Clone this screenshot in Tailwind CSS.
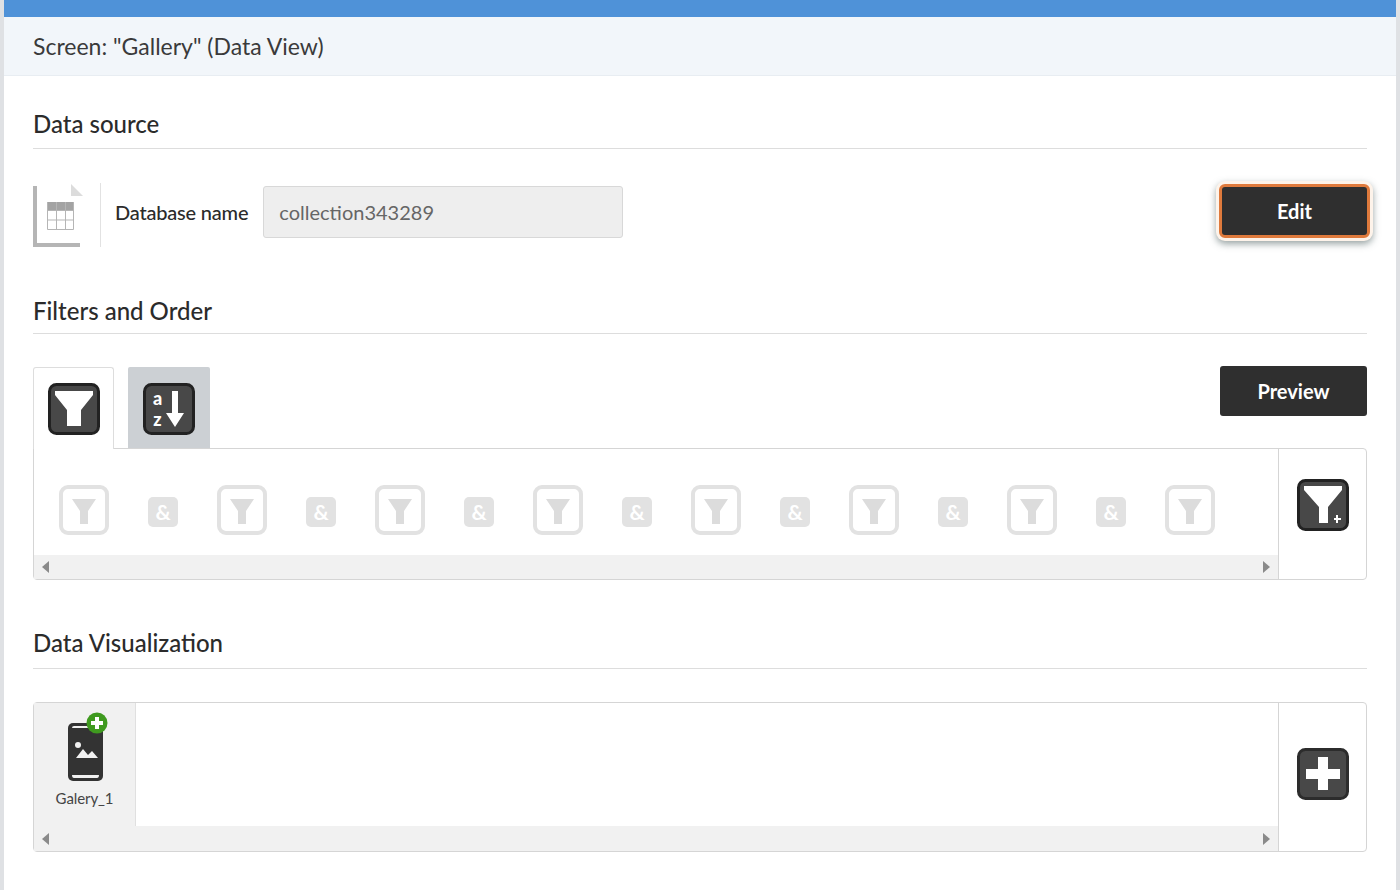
<!DOCTYPE html>
<html>
<head>
<meta charset="utf-8">
<script src="https://cdn.jsdelivr.net/npm/@tailwindcss/browser@4"></script>
</head>
<body class="h-[890px] w-[1400px] overflow-hidden bg-[#dfe1e4] px-1 font-['Lato',sans-serif] text-[#2b2b2b]">
<div class="h-[890px] bg-white">
  <div class="h-[17px] bg-[#4f92d8]"></div>
  <div class="flex h-[59px] items-center border-b border-[#e8edf2] bg-[#f2f6fa] px-[29px] pt-px text-[23px] text-[#3a3a3a]">Screen: "Gallery" (Data View)</div>

  <div class="px-[29px]">
    <h2 class="mt-[31px] h-[42px] border-b border-[#dddddd] text-[24px] leading-[34px] font-medium">Data source</h2>

    <div class="mt-[34px] flex h-[64px] items-start">
      <svg class="mt-px h-[63px] w-[50px]" viewBox="0 0 50 63">
        <path d="M38 0 L50 12 H38 Z" fill="#dcdcdc"/>
        <path d="M0 2 V63 H47 V59 H4 V2 Z" fill="#b5b5b5"/>
        <rect x="14" y="18" width="27" height="8" fill="#a3a3a3"/>
        <path d="M14.500 26 V45.500 H40.500 V18 M14.500 18 V26 M23.500 18 V45.500 M32.500 18 V45.500 M14 26.500 H41 M14 36 H41" fill="none" stroke="#b5b5b5" stroke-width="1"/>
      </svg>
      <div class="ml-[17px] h-[64px] border-l border-[#e2e2e2]"></div>
      <span class="mt-[14px] ml-[14px] text-[20px] leading-[30px] font-medium tracking-[-0.2px] whitespace-nowrap">Database name</span>
      <div class="mt-[3px] ml-[15px] flex h-[52px] w-[360px] items-center rounded-[3px] border border-[#d8d8d8] bg-[#eeeeee] px-[15px] text-[20px] text-[#666666]">collection343289</div>
      <button class="mt-[1px] ml-auto -mr-[3px] flex h-[54px] w-[151px] items-center justify-center rounded-[6px] border-[3px] border-[#df7a3c] bg-[#2f2f2f] text-[20px] font-bold text-white shadow-[0_0_0_3px_#fdf3ea,0_3px_7px_3px_rgba(70,90,90,0.55)]">Edit</button>
    </div>

    <h2 class="mt-[47px] h-[40px] border-b border-[#dddddd] text-[24px] leading-[34px] font-medium">Filters and Order</h2>

    <div class="relative mt-[33px] flex h-[82px] items-start gap-[14px]">
      <div class="relative z-10 flex h-[82px] w-[81px] justify-center rounded-t-[3px] border border-b-0 border-[#dddddd] bg-white pt-[15px]">
        <svg class="h-[52px] w-[52px]" viewBox="0 0 52 52"><rect x="1.500" y="1.500" width="49" height="49" rx="7" fill="#484848" stroke="#222222" stroke-width="3"/><path d="M7 8 H45 V12 L33 27 V43 H19 V27 L7 12 Z" fill="#ffffff"/></svg>
      </div>
      <div class="flex h-[81px] w-[82px] justify-center rounded-t-[2px] bg-[#ccd0d4] pt-4">
        <svg class="h-[52px] w-[52px]" viewBox="0 0 52 52"><rect x="1.500" y="1.500" width="49" height="49" rx="7" fill="#484848" stroke="#222222" stroke-width="3"/><path d="M29 8 H35 V30 H41 L32 44 L23 30 H29 Z" fill="#ffffff"/><text x="14.500" y="22" text-anchor="middle" fill="#ffffff" font-family="Lato" font-weight="900" font-size="18">a</text><text x="14.500" y="43" text-anchor="middle" fill="#ffffff" font-family="Lato" font-weight="900" font-size="18">z</text></svg>
      </div>
      <button class="-mt-px ml-auto flex h-[50px] w-[147px] items-center justify-center rounded-[3px] bg-[#2f2f2f] text-[20px] font-bold text-white">Preview</button>
    </div>

    <div class="-mt-px flex h-[132px] rounded-b-[4px] rounded-tr-[4px] border border-[#d5d5d5]">
      <div class="flex min-w-0 flex-1 flex-col">
        <div class="flex h-[106px] items-start pt-[36px] pl-[25px]">
          <div class="flex items-center gap-[155px] [&>*]:shrink-0" style="gap:0">
            <svg class="h-[50px] w-[50px]" viewBox="0 0 50 50"><rect x="2" y="2" width="46" height="46" rx="7" fill="none" stroke="#e2e2e2" stroke-width="4"/><path d="M13 14 H37 L29 26 V39 H21 V26 Z" fill="#dcdcdc"/></svg>
            <span class="mx-[39px] mt-[3px] flex h-[30px] w-[30px] items-center justify-center rounded-[5px] bg-[#e2e2e2] text-[21px] font-bold text-white">&amp;</span>
            <svg class="h-[50px] w-[50px]" viewBox="0 0 50 50"><rect x="2" y="2" width="46" height="46" rx="7" fill="none" stroke="#e2e2e2" stroke-width="4"/><path d="M13 14 H37 L29 26 V39 H21 V26 Z" fill="#dcdcdc"/></svg>
            <span class="mx-[39px] mt-[3px] flex h-[30px] w-[30px] items-center justify-center rounded-[5px] bg-[#e2e2e2] text-[21px] font-bold text-white">&amp;</span>
            <svg class="h-[50px] w-[50px]" viewBox="0 0 50 50"><rect x="2" y="2" width="46" height="46" rx="7" fill="none" stroke="#e2e2e2" stroke-width="4"/><path d="M13 14 H37 L29 26 V39 H21 V26 Z" fill="#dcdcdc"/></svg>
            <span class="mx-[39px] mt-[3px] flex h-[30px] w-[30px] items-center justify-center rounded-[5px] bg-[#e2e2e2] text-[21px] font-bold text-white">&amp;</span>
            <svg class="h-[50px] w-[50px]" viewBox="0 0 50 50"><rect x="2" y="2" width="46" height="46" rx="7" fill="none" stroke="#e2e2e2" stroke-width="4"/><path d="M13 14 H37 L29 26 V39 H21 V26 Z" fill="#dcdcdc"/></svg>
            <span class="mx-[39px] mt-[3px] flex h-[30px] w-[30px] items-center justify-center rounded-[5px] bg-[#e2e2e2] text-[21px] font-bold text-white">&amp;</span>
            <svg class="h-[50px] w-[50px]" viewBox="0 0 50 50"><rect x="2" y="2" width="46" height="46" rx="7" fill="none" stroke="#e2e2e2" stroke-width="4"/><path d="M13 14 H37 L29 26 V39 H21 V26 Z" fill="#dcdcdc"/></svg>
            <span class="mx-[39px] mt-[3px] flex h-[30px] w-[30px] items-center justify-center rounded-[5px] bg-[#e2e2e2] text-[21px] font-bold text-white">&amp;</span>
            <svg class="h-[50px] w-[50px]" viewBox="0 0 50 50"><rect x="2" y="2" width="46" height="46" rx="7" fill="none" stroke="#e2e2e2" stroke-width="4"/><path d="M13 14 H37 L29 26 V39 H21 V26 Z" fill="#dcdcdc"/></svg>
            <span class="mx-[39px] mt-[3px] flex h-[30px] w-[30px] items-center justify-center rounded-[5px] bg-[#e2e2e2] text-[21px] font-bold text-white">&amp;</span>
            <svg class="h-[50px] w-[50px]" viewBox="0 0 50 50"><rect x="2" y="2" width="46" height="46" rx="7" fill="none" stroke="#e2e2e2" stroke-width="4"/><path d="M13 14 H37 L29 26 V39 H21 V26 Z" fill="#dcdcdc"/></svg>
            <span class="mx-[39px] mt-[3px] flex h-[30px] w-[30px] items-center justify-center rounded-[5px] bg-[#e2e2e2] text-[21px] font-bold text-white">&amp;</span>
            <svg class="h-[50px] w-[50px]" viewBox="0 0 50 50"><rect x="2" y="2" width="46" height="46" rx="7" fill="none" stroke="#e2e2e2" stroke-width="4"/><path d="M13 14 H37 L29 26 V39 H21 V26 Z" fill="#dcdcdc"/></svg>
          </div>
        </div>
        <div class="flex h-6 items-center justify-between bg-[#f1f1f1] px-2">
          <span class="h-0 w-0 border-y-[6px] border-r-[7px] border-y-transparent border-r-[#8a8a8a]"></span>
          <span class="h-0 w-0 border-y-[6px] border-l-[7px] border-y-transparent border-l-[#8a8a8a]"></span>
        </div>
      </div>
      <div class="flex w-[88px] justify-center border-l border-[#d5d5d5] pt-[30px] pl-[1px]">
        <svg class="h-[52px] w-[52px]" viewBox="0 0 52 52"><rect x="1.500" y="1.500" width="49" height="49" rx="7" fill="#484848" stroke="#222222" stroke-width="3"/><path d="M7 7 H45 V11 L31 28 V44 H22 V28 L7 11 Z" fill="#ffffff"/><path d="M37 38 H39 V35 H41 V38 H44 V40 H41 V43 H39 V40 H37 Z" fill="#ffffff" transform="translate(0 1)"/></svg>
      </div>
    </div>

    <h2 class="mt-[46px] h-[43px] border-b border-[#dddddd] text-[24px] leading-[34px] font-medium">Data Visualization</h2>

    <div class="mt-[33px] flex h-[150px] rounded-[4px] border border-[#d5d5d5]">
      <div class="flex min-w-0 flex-1 flex-col">
        <div class="flex h-[123px]">
          <div class="flex w-[102px] flex-col items-center border-r border-[#e0e0e0] bg-[#f1f1f1]">
            <svg class="mt-[9px] h-[70px] w-[52px]" viewBox="0 0 52 70">
              <rect x="9" y="11" width="35" height="58" rx="5" fill="#333333"/>
              <path d="M13 16 Q13 14 15 14 H38 Q40 14 40 16 Z M13 63 H40 Q40 66 38 66 H15 Q13 66 13 63 Z" fill="#f1f1f1"/>
              <circle cx="19" cy="33" r="3" fill="#f1f1f1"/>
              <path d="M17 46 L24 37 L29 43 L33 39 L39 46 Z" fill="#f1f1f1"/>
              <circle cx="38" cy="11" r="10.500" fill="#3f9a1f"/>
              <path d="M36 5 H40 V9 H44 V13 H40 V17 H36 V13 H32 V9 H36 Z" fill="#ffffff"/>
            </svg>
            <span class="mt-[6px] text-[15px] leading-5 tracking-[-0.1px] text-[#444444]">Galery_1</span>
          </div>
        </div>
        <div class="flex h-[25px] items-center justify-between bg-[#f1f1f1] px-2">
          <span class="h-0 w-0 border-y-[6px] border-r-[7px] border-y-transparent border-r-[#8a8a8a]"></span>
          <span class="h-0 w-0 border-y-[6px] border-l-[7px] border-y-transparent border-l-[#8a8a8a]"></span>
        </div>
      </div>
      <div class="flex w-[88px] justify-center border-l border-[#d5d5d5] pt-[45px] pl-[1px]">
        <svg class="h-[52px] w-[52px]" viewBox="0 0 52 52"><rect x="1.500" y="1.500" width="49" height="49" rx="7" fill="#484848" stroke="#2c2c2c" stroke-width="3"/><path d="M21 9 H31 V21 H43 V31 H31 V42 H21 V31 H9 V21 H21 Z" fill="#ffffff"/></svg>
      </div>
    </div>
  </div>
</div>
</body>
</html>
